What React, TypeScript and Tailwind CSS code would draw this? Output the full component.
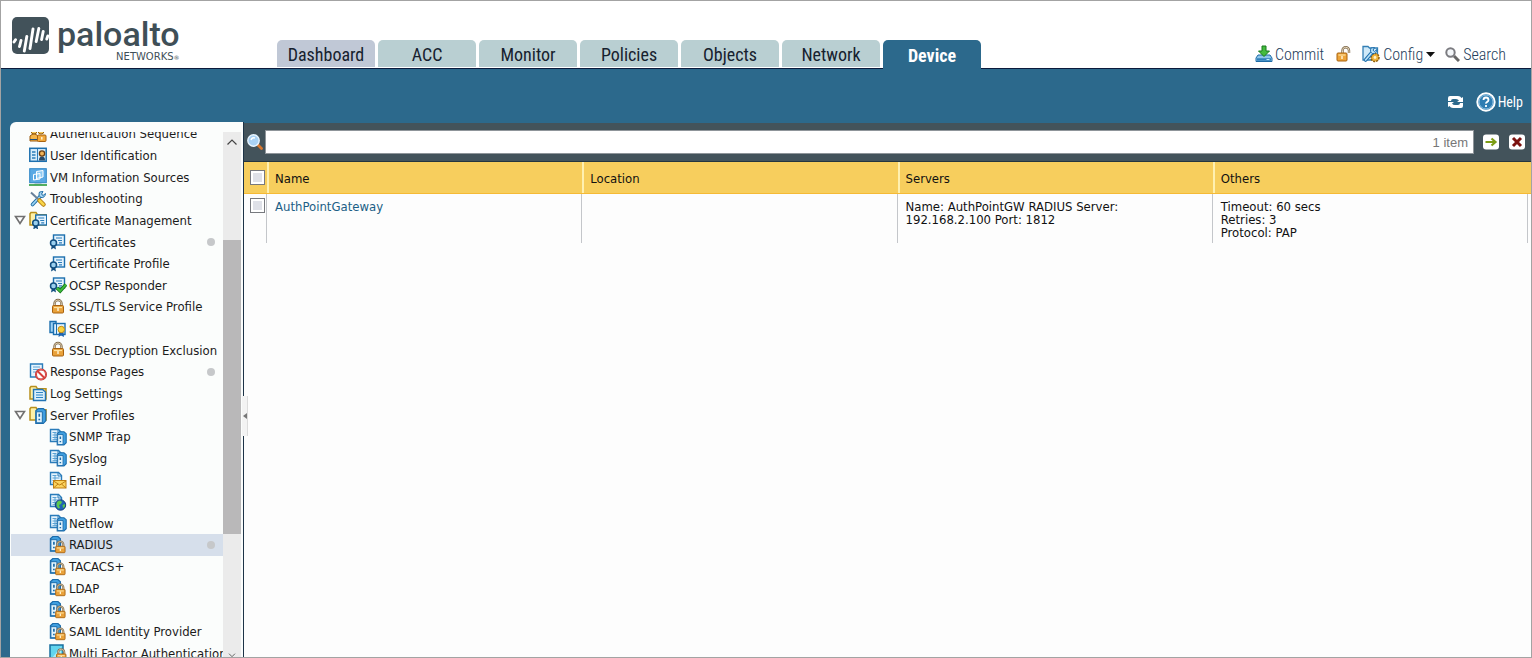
import React from "react";

type IconName =
  | "sequence" | "user" | "vm" | "tools" | "certFolder" | "cert" | "certCheck" | "lock"
  | "scep" | "blocked" | "logs" | "serverFolder" | "docServer" | "docMail" | "docGlobe"
  | "serverLock" | "mfa";

type Item = { label: string; icon: IconName; level: 1 | 2; open?: boolean; dot?: boolean; selected?: boolean };

const items: Item[] = [
  { label: "Authentication Sequence", icon: "sequence", level: 1 },
  { label: "User Identification", icon: "user", level: 1 },
  { label: "VM Information Sources", icon: "vm", level: 1 },
  { label: "Troubleshooting", icon: "tools", level: 1 },
  { label: "Certificate Management", icon: "certFolder", level: 1, open: true },
  { label: "Certificates", icon: "cert", level: 2, dot: true },
  { label: "Certificate Profile", icon: "cert", level: 2 },
  { label: "OCSP Responder", icon: "certCheck", level: 2 },
  { label: "SSL/TLS Service Profile", icon: "lock", level: 2 },
  { label: "SCEP", icon: "scep", level: 2 },
  { label: "SSL Decryption Exclusion", icon: "lock", level: 2 },
  { label: "Response Pages", icon: "blocked", level: 1, dot: true },
  { label: "Log Settings", icon: "logs", level: 1 },
  { label: "Server Profiles", icon: "serverFolder", level: 1, open: true },
  { label: "SNMP Trap", icon: "docServer", level: 2 },
  { label: "Syslog", icon: "docServer", level: 2 },
  { label: "Email", icon: "docMail", level: 2 },
  { label: "HTTP", icon: "docGlobe", level: 2 },
  { label: "Netflow", icon: "docServer", level: 2 },
  { label: "RADIUS", icon: "serverLock", level: 2, dot: true, selected: true },
  { label: "TACACS+", icon: "serverLock", level: 2 },
  { label: "LDAP", icon: "serverLock", level: 2 },
  { label: "Kerberos", icon: "serverLock", level: 2 },
  { label: "SAML Identity Provider", icon: "serverLock", level: 2 },
  { label: "Multi Factor Authentication", icon: "mfa", level: 2 },
];

const tabs = ["Dashboard", "ACC", "Monitor", "Policies", "Objects", "Network", "Device"];

function Padlock() {
  return (
    <g>
      <path d="M5.5 9V5.5a3.5 3.5 0 0 1 7 0V9" fill="none" stroke="#806a4c" strokeWidth="2.4" />
      <path d="M5.5 9V5.5a3.5 3.5 0 0 1 7 0V9" fill="none" stroke="#d9c9a8" strokeWidth="1" />
      <rect x="3.5" y="7.5" width="11" height="7.5" rx="1" fill="#e9a23b" stroke="#a8620f" />
      <path d="M5 9.5h8" stroke="#ffe3a0" strokeWidth="1.2" />
      <path d="M9 10v3" stroke="#fff2cf" strokeWidth="1.5" />
    </g>
  );
}

function Certificate() {
  return (
    <g>
      <rect x="4.5" y="2.5" width="11" height="10" fill="#e4f3fd" stroke="#1c6fae" strokeWidth="1.4" />
      <path d="M7 5.5h6M9 8h4M10 10.3h3" stroke="#2b7dbb" strokeWidth="1.2" />
      <path d="M3 12l-1 5 2.5-1.5L7 17l-1-5z" fill="#134f80" />
      <circle cx="4.5" cy="10.5" r="3" fill="#9bd0ee" stroke="#134f80" strokeWidth="1.5" />
    </g>
  );
}

function Folder() {
  return <path d="M1 14V2.8L2 1.5h5l1.5 2.3H17V14z" fill="#fdf0a8" stroke="#b8901c" strokeWidth="1.5" />;
}

function Doc() {
  return (
    <g>
      <path d="M1.5 1.5h8l3 3v9h-11z" fill="#e6f4fd" stroke="#2a7cba" strokeWidth="1.4" />
      <path d="M9 1.5V5h3.5" fill="none" stroke="#2a7cba" />
      <path d="M3.5 4.5h4M3.5 7h7M3.5 9.5h7M3.5 11.7h5M6 4v8" stroke="#5aa2d4" />
    </g>
  );
}

function Server() {
  return (
    <g>
      <path d="M4 3l2.5-2.2h5L14 3v10l-2.5 2.5H4z" fill="#3f9fe0" stroke="#1c6cab" strokeWidth="1.2" />
      <path d="M4.5 4h6v11h-6z" fill="#e2f4fd" stroke="#1c6cab" />
      <path d="M7.5 6v3M7.5 11v1.5" stroke="#1c6cab" strokeWidth="1.7" />
    </g>
  );
}

function ItemIcon({ name }: { name: IconName }) {
  const art: Record<IconName, React.ReactNode> = {
    sequence: (
      <g>
        <circle cx="5" cy="6" r="3" fill="#f4c85c" stroke="#9a6410" />
        <circle cx="12" cy="6" r="3" fill="#f4c85c" stroke="#9a6410" />
        <path d="M1 11q4-4 8 0v5H1z" fill="#f3b54a" stroke="#9a5a10" />
        <rect x="8.5" y="10" width="8.5" height="6.5" rx="1" fill="#f0a93c" stroke="#a8620f" />
        <path d="M1 14.500h7" stroke="#1d4f80" />
        <path d="M12.8 12v2.5" stroke="#fff2cf" strokeWidth="1.5" />
      </g>
    ),
    user: (
      <g>
        <rect x=".8" y="2.300" width="16.400" height="13" fill="#d7edfb" stroke="#1c6fae" strokeWidth="1.5" />
        <path d="M3 6h3.5M3 9h3.5M3 12h3.5" stroke="#2b7dbb" strokeWidth="1.4" />
        <path d="M8.5 3v12" stroke="#2b7dbb" />
        <path d="M10 14.500c0-3 1-4 3-4s3 1 3 4z" fill="#27496a" />
        <circle cx="13" cy="7.500" r="2.600" fill="#f0b45a" stroke="#6b3d10" strokeWidth="1.300" />
      </g>
    ),
    vm: (
      <g>
        <rect x=".7" y=".7" width="16.6" height="14" fill="#5aa9e4" stroke="#2f86c6" />
        <path d="M7.5 3.500l6.500-1v6.500l-6.500 1.500z" fill="#8cc9f2" stroke="#fff" />
        <path d="M4.500 6.500l6.500-1V11l-6.500 1zM7.500 6v5.500" fill="none" stroke="#fff" />
        <path d="M6 15h6l1.500 1.500h-9z" fill="#a9c3d6" />
        <path d="M0 17h18" stroke="#2a9a3a" strokeWidth="1.6" />
      </g>
    ),
    tools: (
      <g>
        <path d="M3.5 14.500L12 5.500" stroke="#2370a8" strokeWidth="3.600" strokeLinecap="round" />
        <path d="M3.5 14.500L12 5.500" stroke="#9bd4f3" strokeWidth="1.800" strokeLinecap="round" />
        <path d="M10.500 2q-1.500 4 1.500 5.500 4 .5 4.500-4L14 5.500l-1.500-1.300L14 1.500z" fill="#a9d8f4" stroke="#2370a8" />
        <path d="M2 2.500L9 9" stroke="#68819a" strokeWidth="2" />
        <path d="M10.500 10.500l4 4" stroke="#b37c11" strokeWidth="4.5" strokeLinecap="round" />
        <path d="M10.500 10.500l4 4" stroke="#f8d548" strokeWidth="2.5" strokeLinecap="round" />
      </g>
    ),
    certFolder: <g><Folder /><g transform="translate(2.2 1.500)"><Certificate /></g></g>,
    cert: <g transform="translate(0 -.5)"><Certificate /></g>,
    certCheck: (
      <g>
        <g transform="translate(0 -.5)"><Certificate /></g>
        <path d="M8 12l3.200 3L17 8.500" fill="none" stroke="#177a1d" strokeWidth="3.600" />
        <path d="M8 12l3.200 3L17 8.500" fill="none" stroke="#3fbf3c" strokeWidth="1.800" />
      </g>
    ),
    lock: <Padlock />,
    scep: (
      <g>
        <path d="M1 1.500h6v11H1z" fill="#9fd3f4" stroke="#1c6fae" strokeWidth="1.4" />
        <rect x="4.500" y="3.500" width="11.500" height="11" fill="#e0f2fd" stroke="#1c6fae" strokeWidth="1.4" />
        <path d="M7.5 4v10" stroke="#1c6fae" />
        <path d="M10 12l-.5 5 2.500-1.500 3 1.500-.5-5z" fill="#1f64b0" />
        <circle cx="12.300" cy="9.500" r="3.200" fill="#fbd33b" stroke="#c68a10" />
      </g>
    ),
    blocked: (
      <g>
        <path d="M1.5 1h12v13h-12z" fill="#e6f4fd" stroke="#2a7cba" strokeWidth="1.4" />
        <path d="M4 4h7M4 6.500h7M4 9h3" stroke="#5aa2d4" />
        <circle cx="12" cy="11.500" r="5" fill="#fff" stroke="#b92a2a" strokeWidth="2" />
        <circle cx="12" cy="11.500" r="5" fill="none" stroke="#ee6560" />
        <path d="M8.500 8l7 7" stroke="#d8403c" strokeWidth="2" />
      </g>
    ),
    logs: (
      <g>
        <Folder />
        <path d="M4.500 4.500h9l3 2.500v8.500h-12z" fill="#d8effc" stroke="#2374b3" strokeWidth="1.4" />
        <path d="M7 7.500h7M7 10h7M7 12.500h7" stroke="#2f86c4" strokeWidth="1.2" />
      </g>
    ),
    serverFolder: <g><Folder /><g transform="translate(2.800 1.800)"><Server /></g></g>,
    docServer: <g><Doc /><g transform="translate(4.600 3) scale(.9)"><Server /></g></g>,
    docMail: (
      <g>
        <Doc />
        <rect x="4.500" y="9.500" width="12.500" height="7.500" fill="#fbd45f" stroke="#c07f12" />
        <path d="M4.500 10l6.200 4 6.300-4M4.500 17l4.500-4M17 17l-4.500-4" fill="none" stroke="#c07f12" />
      </g>
    ),
    docGlobe: (
      <g>
        <Doc />
        <circle cx="11.500" cy="12" r="5.200" fill="#1f63b5" stroke="#163f7e" />
        <path d="M8 9q3-3 5 0l-1 2-2 1 1 3-1.500.5Q6.500 13 8 9M13.500 12l2.500-1q.5 3-2 4z" fill="#5cc94b" />
      </g>
    ),
    serverLock: (
      <g>
        <g transform="translate(-2.600 -.3)"><Server /></g>
        <g transform="translate(3.600 3.800) scale(.86)"><Padlock /></g>
      </g>
    ),
    mfa: (
      <g>
        <path d="M1 1h13v16H1z" fill="#62d5ee" stroke="#176f9e" strokeWidth="1.5" />
        <path d="M3 14L12 3v11z" fill="#a9edf8" />
        <g transform="translate(4.500 3.500) scale(.86)"><Padlock /></g>
      </g>
    ),
  };
  return (
    <svg viewBox="0 0 18 18" className="size-[18px] shrink-0" aria-hidden="true">
      {art[name]}
    </svg>
  );
}

function Logo() {
  return (
    <a href="#home" className="flex w-[276px] shrink-0 items-start pt-4 pl-[11px] text-[#3f4f57]">
      <svg viewBox="0 0 37 37" className="size-[37px] shrink-0" aria-hidden="true">
        <rect width="37" height="37" rx="5" fill="#42525a" />
        <path
          d="M2 25l1.500-2.200M7.500 29.500L9 23.500M12.300 34L14.800 19.500M18 31.500L21 12M24.200 24.500L26.800 11.500M29.600 22.500L31.200 14.500M34.800 22l1-3"
          fill="none"
          stroke="#fff"
          strokeWidth="2.900"
          strokeLinecap="round"
        />
      </svg>
      <span className="ml-2 flex flex-col items-end">
        <span className="font-[Roboto,sans-serif] text-[34px] leading-[35px] font-medium">paloalto</span>
        <span className="font-['DejaVu_Sans',sans-serif] text-[10px] leading-[10px]">
          NETWORKS<span className="text-[6px]">®</span>
        </span>
      </span>
    </a>
  );
}

function HeaderActions() {
  return (
    <div className="mr-[25px] ml-auto flex items-center text-[16px] font-light text-[#24405c]">
      <button type="button" className="flex items-center gap-[2px]">
        <svg viewBox="0 0 18 18" className="size-[18px]" aria-hidden="true">
          <path d="M3 10h12l2 3v3.500H1V13z" fill="#8fc6ea" stroke="#1d6aa5" />
          <path d="M2 14.500h14" stroke="#2f7fba" strokeWidth="2.500" />
          <path d="M11.500 14.500h3" stroke="#bdf0ff" />
          <path d="M7 1h4v5h3.500L9 11.500 3.500 6H7z" fill="#45bb3e" stroke="#187a1d" />
        </svg>
        Commit
      </button>
      <button type="button" aria-label="Locks" className="ml-3">
        <svg viewBox="0 0 16 16" className="size-4" aria-hidden="true">
          <path d="M6.500 8V4.500a3 3 0 0 1 6.500 0V7" fill="none" stroke="#806a4c" strokeWidth="2.400" />
          <path d="M6.500 8V4.500a3 3 0 0 1 6.500 0V7" fill="none" stroke="#e5d8bc" />
          <rect x="1" y="7" width="10" height="8" rx="1" fill="#eda43a" stroke="#a8620f" />
          <path d="M2.500 9h7" stroke="#ffe3a0" strokeWidth="1.200" />
          <path d="M6 10v3" stroke="#fff2cf" strokeWidth="1.500" />
        </svg>
      </button>
      <button type="button" className="ml-[10px] flex items-center gap-[3px]">
        <svg viewBox="0 0 18 18" className="size-[18px]" aria-hidden="true">
          <path d="M1 1.500h5l1.500 1.500h8V15H1z" fill="#cfe9f8" stroke="#337fb5" strokeWidth="1.300" />
          <circle cx="13" cy="12.500" r="4" fill="#eeb23a" stroke="#8f5e0c" strokeWidth="1.500" strokeDasharray="2 1" />
          <circle cx="13" cy="12.500" r="1.400" fill="#fff3c9" />
          <path d="M3.500 15L10 7.500" stroke="#1f6fae" strokeWidth="3.600" strokeLinecap="round" />
          <path d="M3.500 15L10 7.500" stroke="#b8e1f7" strokeWidth="1.600" strokeLinecap="round" />
          <path d="M9 3q-1.500 4 1.500 5.500 4 .5 4.500-4L12.500 6.500 11 5.200 12.500 2.500z" fill="#b8e1f7" stroke="#1f6fae" />
        </svg>
        Config
        <svg viewBox="0 0 9 5" className="h-[5px] w-[9px]" aria-hidden="true"><path d="M0 0h9L4.500 5z" fill="#111" /></svg>
      </button>
      <button type="button" className="ml-[10px] flex items-center gap-[3px]">
        <svg viewBox="0 0 15 15" className="size-[15px]" aria-hidden="true">
          <path d="M9 9l5 5" stroke="#666" strokeWidth="3" />
          <circle cx="5.500" cy="5.500" r="4.200" fill="#f4f7fa" stroke="#7b7b80" strokeWidth="2" />
        </svg>
        Search
      </button>
    </div>
  );
}

function Sidebar() {
  return (
    <aside className="relative flex w-[234px] shrink-0 flex-col rounded-tl-md border-r border-[#1d3347] bg-[#fbfdfc] pt-[10px] pr-[2px]">
      <div className="flex min-h-0 flex-1 overflow-hidden">
        <ul className="-mt-[9px] -mb-[7px] flex min-w-0 flex-1 flex-col overflow-hidden pl-px">
          {items.map((item) => (
            <li key={item.label} className={`flex min-h-[21px] flex-1 items-center ${item.selected ? "bg-[#d6dfeb]" : ""}`}>
              <span className={`flex shrink-0 items-center pl-[3px] ${item.level === 1 ? "w-[18px]" : "w-[38px]"}`}>
                {item.open && (
                  <svg viewBox="0 0 12 10" className="h-[10px] w-3" aria-hidden="true">
                    <path d="M1.500 1.500h9L6 8.500z" fill="#fff" stroke="#707070" strokeWidth="1.600" />
                  </svg>
                )}
              </span>
              <a
                href="#item"
                className={`flex min-w-0 flex-1 items-center whitespace-nowrap text-[#1b1b1b] ${item.level === 1 ? "gap-[3px]" : "gap-[2px]"}`}
              >
                <ItemIcon name={item.icon} />
                {item.label}
              </a>
              {item.dot && <span className="mr-2 size-2 shrink-0 rounded-full bg-[#c6c8ca]" />}
            </li>
          ))}
        </ul>
        <div className="flex w-[18px] shrink-0 flex-col items-center bg-[#ebebeb]">
          <svg viewBox="0 0 10 6" className="mt-[7px] h-[6px] w-[10px] shrink-0" aria-hidden="true">
            <path d="M.5 5.500L5 1l4.500 4.500" fill="none" stroke="#444" strokeWidth="1.200" />
          </svg>
          <div className="mt-[95px] h-[56%] w-full bg-[#b9b8b9]" />
          <svg viewBox="0 0 10 6" className="mt-auto h-[4px] w-[10px] shrink-0" aria-hidden="true">
            <path d="M.5 1L5 5.500 9.500 1" fill="none" stroke="#444" strokeWidth="1.200" />
          </svg>
        </div>
      </div>
      <button
        type="button"
        aria-label="Collapse sidebar"
        className="absolute top-[55%] -right-[5px] flex h-10 w-[6px] -translate-y-5 items-center justify-center border-r border-[#dcdcdc] bg-[#f3f3f3]"
      >
        <svg viewBox="0 0 4 6" className="h-[6px] w-1" aria-hidden="true"><path d="M4 0v6L0 3z" fill="#777" /></svg>
      </button>
    </aside>
  );
}

const bodyCell = "border-r border-[#c4c6ca] px-2 pt-[6px] text-left";
const box = "block size-[15px] appearance-none border border-[#77797e] bg-[#dfe1e8] shadow-[inset_0_0_0_2px_#fff]";

export default function App() {
  return (
    <div className="flex h-screen flex-col overflow-hidden border border-[#a3a3a3] bg-[#2c698c] font-['DejaVu_Sans_Condensed','DejaVu_Sans',sans-serif] text-[13px] leading-[13px]">
      <header className="flex h-[68px] shrink-0 border-b border-[#0b1b3c] bg-white font-['Liberation_Sans_Narrow','Roboto_Condensed',sans-serif]">
        <Logo />
        <nav className="-mb-px flex items-end gap-[3px]">
          {tabs.map((tab) => (
            <a
              key={tab}
              href="#tab"
              className={`flex w-[98px] items-center justify-center rounded-t-[5px] pt-[2px] text-[18px] ${
                tab === "Device"
                  ? "h-[29px] bg-[#2c698c] font-bold text-white"
                  : tab === "Dashboard"
                    ? "mb-[2px] h-[27px] bg-[#c0c8d6] text-[#16212e]"
                    : "mb-[2px] h-[27px] bg-[#b9cfd2] text-[#16212e]"
              }`}
            >
              {tab}
            </a>
          ))}
        </nav>
        <div className="flex flex-1 items-end pb-[5px]">
          <HeaderActions />
        </div>
      </header>

      <div className="flex h-[53px] shrink-0 items-end justify-end gap-3 pr-2 pb-[10px] font-['Liberation_Sans_Narrow','Roboto_Condensed',sans-serif] text-[14px] text-white">
        <button type="button" aria-label="Refresh" className="flex h-5 items-center">
          <svg viewBox="0 0 17 14" className="h-[14px] w-[17px]" aria-hidden="true">
            <path d="M1 6V3q0-2 2-2h8q2.500 0 3.500 2L16 2v5h-6l2-1.500Q11 4 9 4H6Q4 4 4 6z" fill="#fff" />
            <path d="M16 8v3q0 2-2 2H6q-2.500 0-3.500-2L1 12V7h6L5 8.500Q6 10 8 10h3q2 0 2-2z" fill="#fff" />
          </svg>
        </button>
        <button type="button" className="flex h-5 items-center gap-[2px]">
          <svg viewBox="0 0 20 20" className="size-5" aria-hidden="true">
            <circle cx="10" cy="10" r="8.700" fill="#2f7db2" stroke="#fff" strokeWidth="2" />
            <circle cx="10" cy="10" r="7" fill="none" stroke="#8fc1e2" />
            <path d="M7.500 8q0-2.500 2.500-2.500T12.500 8q0 1.200-1.300 1.900T10 11.700M10 13v2" fill="none" stroke="#fff" strokeWidth="1.800" />
          </svg>
          Help
        </button>
      </div>

      <div className="flex min-h-0 flex-1 pl-[9px]">
        <Sidebar />
        <main className="flex min-w-0 flex-1 flex-col bg-[#fdfdfd]">
          <div className="flex h-10 shrink-0 items-center border-t border-b border-t-[#2c698c] border-b-[#25363f] bg-[#43535b] pl-[3px]">
            <svg viewBox="0 0 16 16" className="size-4 shrink-0" aria-hidden="true">
              <path d="M10.500 10.500l4 4" stroke="#d9772e" strokeWidth="2.800" strokeLinecap="round" />
              <circle cx="6.500" cy="6.500" r="5.700" fill="#a9d2f5" stroke="#e8f5ff" strokeWidth="1.400" />
              <path d="M4 6q1-3 4-2" fill="none" stroke="#fff" strokeWidth="1.500" />
            </svg>
            <div className="ml-[2px] flex h-6 flex-1 items-center border border-[#8f959a] bg-white pr-[5px]">
              <input aria-label="Filter" className="h-full min-w-0 flex-1 px-1 outline-none" />
              <span className="font-['Liberation_Sans',sans-serif] text-[13px] text-[#777]">1 item</span>
            </div>
            <button type="button" aria-label="Apply filter" className="ml-[9px]">
              <svg viewBox="0 0 16 16" className="size-4" aria-hidden="true">
                <rect y=".5" width="16" height="15" rx="3" fill="#fff" />
                <path d="M2.500 8h9M8.500 4.500L12.500 8l-4 3.500" fill="none" stroke="#7d9d14" strokeWidth="2.200" />
              </svg>
            </button>
            <button type="button" aria-label="Clear filter" className="mr-[6px] ml-[10px]">
              <svg viewBox="0 0 16 16" className="size-4" aria-hidden="true">
                <rect y=".5" width="16" height="15" rx="3" fill="#fff" />
                <path d="M4 4l8 8M12 4l-8 8" stroke="#7c1210" strokeWidth="3" />
              </svg>
            </button>
          </div>

          <table className="w-full table-fixed border-separate border-spacing-0 text-[#111]">
            <colgroup>
              <col className="w-[23px]" />
              <col />
              <col />
              <col />
              <col />
              <col className="w-[3px]" />
            </colgroup>
            <thead>
              <tr className="h-8 bg-[#f7ce5d]">
                <th className="border-b border-[#f6ba35] pl-[6px]">
                  <input type="checkbox" aria-label="Select all" className={box} />
                </th>
                {["Name", "Location", "Servers", "Others"].map((head) => (
                  <th key={head} className="border-b border-[#f6ba35]">
                    <div className="flex h-[31px] items-center border-l-2 border-[#fff0b0] px-[6px] pt-[2px] text-left font-normal">
                      {head}
                    </div>
                  </th>
                ))}
                <td className="border-b border-[#f6ba35]" />
              </tr>
            </thead>
            <tbody>
              <tr className="h-[49px] align-top">
                <td className="border-r border-[#c4c6ca] pt-1 pl-[6px]">
                  <input type="checkbox" aria-label="Select AuthPointGateway" className={box} />
                </td>
                <td className={bodyCell}><a href="#profile" className="text-[#1c5f86]">AuthPointGateway</a></td>
                <td className={bodyCell} />
                <td className={bodyCell}>Name: AuthPointGW RADIUS Server:<br />192.168.2.100 Port: 1812</td>
                <td className={bodyCell}>Timeout: 60 secs<br />Retries: 3<br />Protocol: PAP</td>
                <td />
              </tr>
            </tbody>
          </table>
        </main>
      </div>
    </div>
  );
}
